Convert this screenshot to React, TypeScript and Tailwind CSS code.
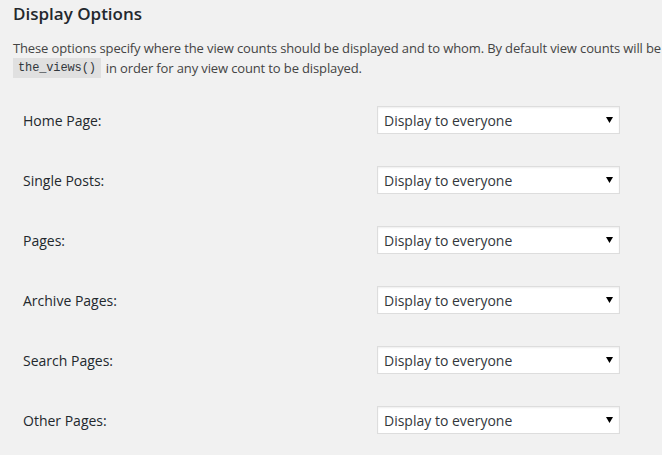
import React from "react";

const rows = [
  "Home Page:",
  "Single Posts:",
  "Pages:",
  "Archive Pages:",
  "Search Pages:",
  "Other Pages:",
];

function FakeSelect({ value }: { value: string }) {
  return (
    <div className="flex items-center justify-between w-[243px] h-[28px] bg-white border border-[#dddddd] pl-[6px] pr-[6px] text-[14px] text-[#32373c] shadow-[inset_0_1px_2px_rgba(0,0,0,0.07)]">
      <span>{value}</span>
      <svg width="7" height="6" viewBox="0 0 7 6">
        <path d="M0 0 L7 0 L3.5 6 Z" fill="#000" />
      </svg>
    </div>
  );
}

export default function App() {
  return (
    <div className="w-[662px] h-[455px] overflow-hidden bg-[#f1f1f1] font-['Open_Sans',sans-serif]">
      <h2 className="pl-[13px] pt-[1px] text-[17px] leading-[25px] font-semibold text-[#23282d]">
        Display Options
      </h2>
      <div className="pl-[13px] mt-[12px] text-[13px] tracking-[-0.01em] text-[#444444] whitespace-nowrap">
        <div className="h-[20px] leading-[20px]">
          These options specify where the view counts should be displayed and
          to whom. By default view counts will be displayed to everyone.
        </div>
        <div className="flex items-center h-[20px] leading-[20px]">
          <code className="block px-[5px] h-[20px] bg-[rgba(0,0,0,0.07)] font-['Liberation_Mono',monospace] text-[12px] leading-[20px] text-[#32373c]">
            the_views()
          </code>
          <span className="ml-[5px]">
            in order for any view count to be displayed.
          </span>
        </div>
      </div>
      <div className="mt-[12px]">
        {rows.map((label) => (
          <div key={label} className="flex items-center h-[60px] pl-[23px]">
            <div className="w-[354px] text-[14px] text-[#23282d]">{label}</div>
            <FakeSelect value="Display to everyone" />
          </div>
        ))}
      </div>
    </div>
  );
}
